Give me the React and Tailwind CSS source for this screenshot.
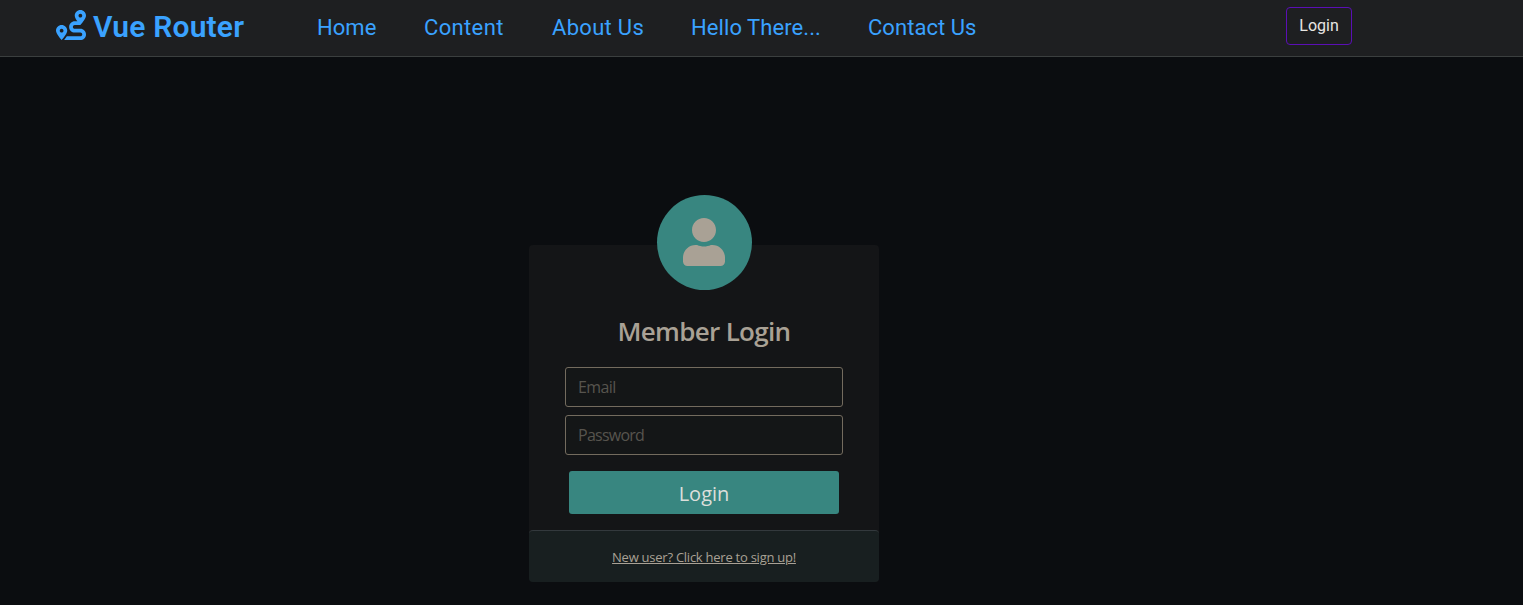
import { FaRoute, FaUser } from "react-icons/fa";

const links = [
  { label: "Home", width: "w-[107px]", spacing: "tracking-[0.05px]" },
  { label: "Content", width: "w-[128px]", spacing: "tracking-[0.35px]" },
  { label: "About Us", width: "w-[139px]", spacing: "tracking-[0.3px]" },
  { label: "Hello There...", width: "w-[177px]", spacing: "tracking-[0.08px]" },
  { label: "Contact Us", width: "w-[120px]", spacing: "tracking-[0.05px]" },
];

function Navbar() {
  return (
    <header className="flex h-[57px] items-start border-b border-[#3b3f3f] bg-[#1e1f21] font-['Roboto',sans-serif]">
      <a className="flex w-[261px] items-start pl-[56px] pt-[10px] text-[#3aa2ff]">
        <FaRoute className="size-[30px] shrink-0" />
        <span className="ml-[7px] whitespace-nowrap text-[30px] font-semibold leading-[34px] tracking-[0.2px]">Vue Router</span>
      </a>
      <nav className="ml-[56px] flex pt-[11px] text-[22px] leading-[34px] text-[#3aa2ff]">
        {links.map((l) => (
          <a key={l.label} className={`${l.width} ${l.spacing} whitespace-nowrap`}>{l.label}</a>
        ))}
      </nav>
      <button className="ml-auto mr-[171px] mt-[7px] h-[38px] w-[66px] rounded border border-[#5b0fb5] text-base leading-6 text-[#e8e6e3]">
        Login
      </button>
    </header>
  );
}

function LoginCard() {
  return (
    <section className="ml-[529px] mt-[188px] flex h-[337px] w-[350px] flex-col rounded bg-[#141517]">
      <div className="mx-auto -mt-[50px] flex size-[95px] shrink-0 items-center justify-center rounded-full bg-[#388680] pb-px text-[#a9a195]">
        <FaUser className="size-12" />
      </div>
      <h1 className="mt-[25px] whitespace-nowrap text-center text-[26px] font-semibold leading-8 tracking-[-0.68px] text-[#a9a195]">Member Login</h1>
      <form className="mt-[20px] flex flex-col px-9">
        <input placeholder="Email" className="h-10 rounded-[3px] border border-[#736b5e] bg-[#141617] px-3 text-base tracking-[-0.6px] placeholder:text-[#57544e]" />
        <input placeholder="Password" className="mt-2 h-10 rounded-[3px] border border-[#736b5e] bg-[#141617] px-3 text-base tracking-[-0.75px] placeholder:text-[#57544e]" />
        <button type="button" className="mx-1 mt-4 h-[43px] rounded-[3px] bg-[#388680] pt-0.5 text-xl text-[#dddfdb]">Login</button>
      </form>
      <footer className="mt-auto flex h-[52px] items-center justify-center rounded border-t border-[#33393d] bg-[#181f20] pt-0.5">
        <a className="whitespace-nowrap text-[13px] tracking-[-0.25px] text-[#a9a195] underline">New user? Click here to sign up!</a>
      </footer>
    </section>
  );
}

export default function App() {
  return (
    <div className="h-[605px] w-full overflow-hidden bg-[#0b0d10] font-['Open_Sans',sans-serif]">
      <Navbar />
      <LoginCard />
    </div>
  );
}
